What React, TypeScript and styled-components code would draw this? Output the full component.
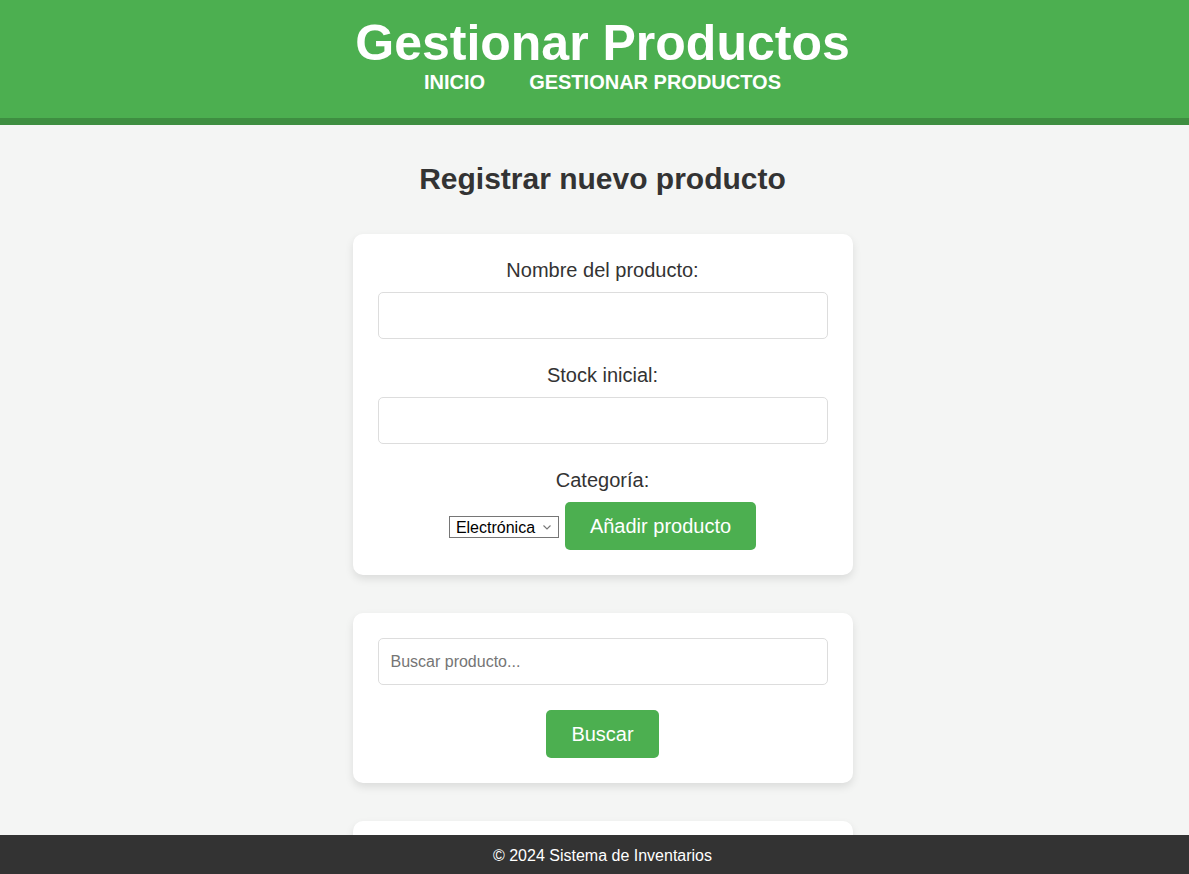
import { useState } from "react";
import styled, { createGlobalStyle } from "styled-components";

const GlobalStyle = createGlobalStyle`
  html, body {
    margin: 0;
    padding: 0;
    background-color: #f4f5f4;
    font-family: "Liberation Sans", Arial, sans-serif;
  }
`;

function App() {
  const [nombre, setNombre] = useState("");
  const [stock, setStock] = useState("");
  const [categoria, setCategoria] = useState("electronica");
  const [busqueda, setBusqueda] = useState("");

  return (
    <>
      <GlobalStyle />
      <Header>
        <Title>Gestionar Productos</Title>
        <Nav>
          <NavLink href="#">Inicio</NavLink>
          <NavLink href="#">Gestionar productos</NavLink>
        </Nav>
      </Header>

      <Main>
        <PageTitle>Registrar nuevo producto</PageTitle>

        <Card as="form" onSubmit={(e: any) => e.preventDefault()}>
          <Label htmlFor="nombre">Nombre del producto:</Label>
          <Input id="nombre" value={nombre} onChange={(e) => setNombre(e.target.value)} />

          <Label htmlFor="stock">Stock inicial:</Label>
          <Input id="stock" type="number" value={stock} onChange={(e) => setStock(e.target.value)} />

          <Label htmlFor="categoria">Categoría:</Label>
          <Row>
            <SelectWrap>
              <Select id="categoria" value={categoria} onChange={(e) => setCategoria(e.target.value)}>
                <option value="electronica">Electrónica</option>
                <option value="ropa">Ropa</option>
                <option value="hogar">Hogar</option>
              </Select>
              <Chevron width="8" height="5" viewBox="0 0 8 5">
                <path d="M0.5 0.5 L4 4 L7.5 0.5" fill="none" stroke="#767676" strokeWidth="1.1" />
              </Chevron>
            </SelectWrap>
            <Button type="submit">Añadir producto</Button>
          </Row>
        </Card>

        <Card>
          <Input
            placeholder="Buscar producto..."
            value={busqueda}
            onChange={(e) => setBusqueda(e.target.value)}
          />
          <Row>
            <Button>Buscar</Button>
          </Row>
        </Card>

        <Card>
          <ProductList />
        </Card>
      </Main>

      <Footer>© 2024 Sistema de Inventarios</Footer>
    </>
  );
}

const Header = styled.header`
  background-color: #4caf50;
  border-bottom: 7px solid #3e8e41;
  padding: 15px 0 24px 16px;
  text-align: center;
  color: #fff;
`;

const Title = styled.h1`
  margin: 0;
  font-size: 50px;
  line-height: 56px;
  font-weight: bold;
`;

const Nav = styled.nav`
  display: flex;
  justify-content: center;
  gap: 44px;
`;

const NavLink = styled.a`
  color: #fff;
  text-decoration: none;
  text-transform: uppercase;
  font-weight: bold;
  font-size: 20px;
  line-height: 23px;
`;

const Main = styled.main`
  padding: 36px 0 80px 16px;
  display: flex;
  flex-direction: column;
  align-items: center;
  gap: 38px;
`;

const PageTitle = styled.h2`
  margin: 0;
  font-size: 30px;
  line-height: 35px;
  color: #333;
`;

const Card = styled.div`
  box-sizing: border-box;
  width: 500px;
  padding: 25px;
  background-color: #fff;
  border-radius: 10px;
  box-shadow: 0 4px 8px rgba(0, 0, 0, 0.1);
  display: flex;
  flex-direction: column;
  align-items: center;
`;

const Label = styled.label`
  font-size: 20px;
  line-height: 23px;
  color: #333;
  margin-bottom: 10px;
`;

const Input = styled.input`
  box-sizing: border-box;
  width: 100%;
  height: 47px;
  padding: 0 12px;
  margin-bottom: 25px;
  border: 1px solid #ddd;
  border-radius: 5px;
  font-family: inherit;
  font-size: 16px;
  color: #333;
  outline: none;

  &::placeholder {
    color: #757575;
  }
`;

const Row = styled.div`
  display: flex;
  align-items: center;
  justify-content: center;
  gap: 6px;
`;

const SelectWrap = styled.div`
  position: relative;
  display: flex;
  margin-top: 2px;
`;

const Select = styled.select`
  appearance: none;
  box-sizing: border-box;
  width: 110px;
  height: 22px;
  padding: 0 0 0 6px;
  font-family: inherit;
  font-size: 16px;
  color: #000;
  background-color: #fff;
  border: 1px solid #767676;
  border-radius: 0;
  outline: none;
`;

const Chevron = styled.svg`
  position: absolute;
  right: 8px;
  top: 9px;
  pointer-events: none;
`;

const Button = styled.button`
  background-color: #4caf50;
  color: #fff;
  border: none;
  border-radius: 5px;
  padding: 12px 25px;
  font-family: inherit;
  font-size: 20px;
  line-height: 24px;
  cursor: pointer;
`;

function ProductList() {
  return <EmptyList />;
}

const EmptyList = styled.div`
  height: 120px;
`;

const Footer = styled.footer`
  position: fixed;
  left: 0;
  right: 0;
  bottom: 0;
  box-sizing: border-box;
  height: 39px;
  padding: 3px 0 0 16px;
  background-color: #333;
  color: #fff;
  font-size: 16px;
  display: flex;
  align-items: center;
  justify-content: center;
`;

export default App;
